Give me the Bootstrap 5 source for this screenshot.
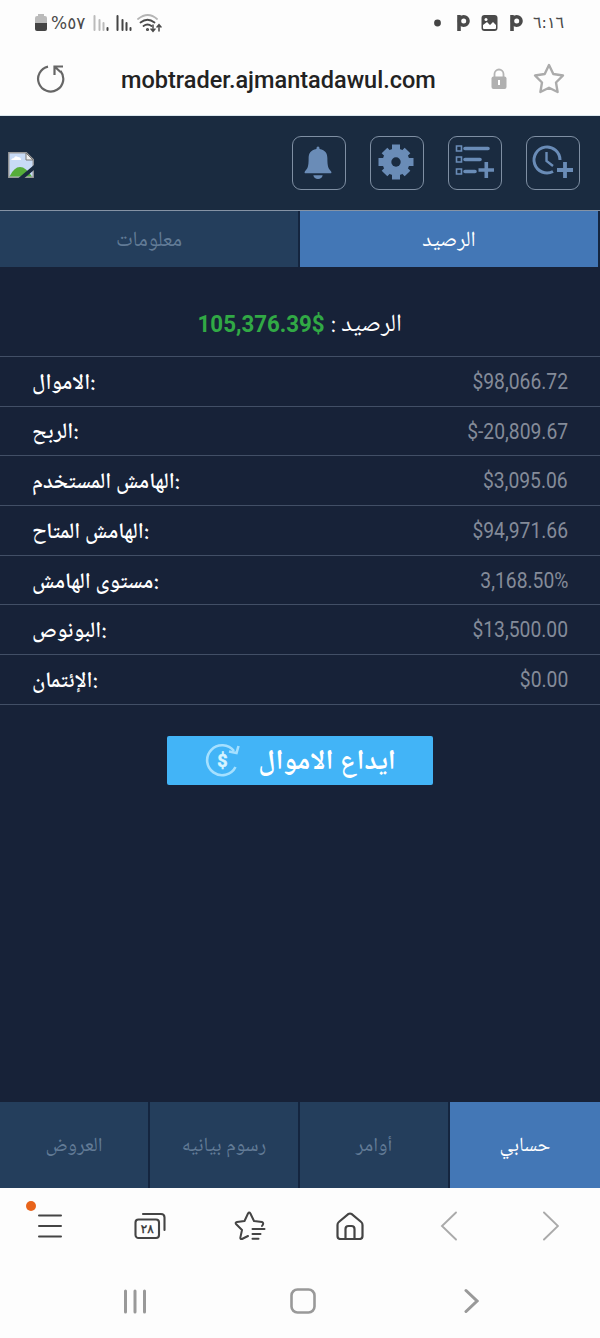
<!DOCTYPE html>
<html lang="ar">
<head>
<meta charset="utf-8">
<meta name="viewport" content="width=device-width, initial-scale=1">
<title>Mob Trader</title>
<link href="https://cdn.jsdelivr.net/npm/bootstrap@5.3.0/dist/css/bootstrap.min.css" rel="stylesheet">
<style>
body{font-family:Roboto,"Noto Sans Arabic","Noto Sans","DejaVu Sans",sans-serif;background:#fdfdfd;color:#fff;height:1338px;overflow:hidden;line-height:1}
svg{display:block;flex:none}
.ar{font-family:"Noto Naskh Arabic UI","Noto Sans Arabic","DejaVu Sans",sans-serif;white-space:nowrap;display:inline-block;padding-top:3px}
.digits{font-family:"DejaVu Sans",sans-serif;white-space:nowrap}
.status{height:46px;padding:0 36px 0 34px;color:#4a4a4a}
.addr{height:70px;padding:0 34px 3px 36px;border-bottom:1px solid #dce8ee}
.url{font-size:23.500px;font-weight:500;color:#222;width:318px;margin-left:55px;padding-top:3px}
.apphead{height:95px;background:#1a2b40;border-bottom:1px solid #8593a5;padding:0 20px 1px 8px}
.tool{width:54px;height:54px;border:1px solid #7f8fa3;border-radius:9px;background:transparent}
.tabcell{background:#243e5c;color:#627b96;border-right:2px solid #14253f;font-size:21.600px}
.tabcell.on{background:#4377b6;color:#fff}
.toptabs{height:56px;background:#16233a}
.panel{background:#172238;height:835px}
.balance{height:89px;padding-top:24px}
.fin{height:49.7px;border-top:1px solid #424f66;padding:0 32px}
.fin:last-child{border-bottom:1px solid #424f66;height:50.7px}
.num{font-size:22px;color:#848b99;display:inline-block;transform:scaleX(.877);transform-origin:100% 50%;padding-top:1px}
.total{font-size:24.500px;font-weight:700;color:#31a945;display:inline-block;transform:scaleX(.91);transform-origin:100% 50%;margin-left:-13px;padding-top:1px}
.lbl{font-size:22.100px;font-weight:600}
.deposit{width:266px;height:49px;background:#42b4f7;border-radius:2px;color:#fff;margin-top:31px}
.bottabs{height:86px;background:#14253f}
.bottabs .tabcell{font-size:20.200px}
.browser{height:75px}
.bitem{width:100px}
.alertdot{width:10px;height:10px;background:#e8641b;left:26px;top:-12px}
</style>
</head>
<body>
<div class="status d-flex align-items-center justify-content-between">
  <div class="d-flex align-items-center">
    <svg width="14" height="20" viewBox="0 0 14 20"><path d="M4 1h6v2h1q2 0 2 2v5H1V5q0-2 2-2h1z" fill="#bbb"/><path d="M1 10h12v6q0 2-2 2H3q-2 0-2-2z" fill="#444"/></svg>
    <span class="digits" style="font-size:17px;width:34px;margin-left:3px" dir="ltr">%&lrm;٥٧</span>
    <svg class="ms-2" width="16" height="18" viewBox="0 0 16 18" stroke-width="2" stroke-linecap="round"><path d="M1.500 2v14M6.500 6v10M10.500 9v7" stroke="#bbb"/><path d="M14.500 14v2" stroke="#444"/></svg>
    <svg style="margin-left:7px" width="16" height="18" viewBox="0 0 16 18" stroke="#444" stroke-width="2" stroke-linecap="round"><path d="M1.500 2v14M6.500 6v10M10.500 9v7M14.500 14v2"/></svg>
    <svg style="margin-left:5px" width="25" height="20" viewBox="0 0 25 20" fill="none" stroke="#4a4a4a" stroke-width="1.800" stroke-linecap="round"><path d="M1 6q10-8 19 0" stroke="#b5b5b5"/><path d="M3.500 9.500q7-5.500 14 0M6.500 13q4-3 8 0"/><circle cx="10.500" cy="16.500" r=".7"/><path d="M16 12v6m-2-2 2 2.300 2-2.300M22 18v-6m-2 2 2-2.300 2 2.300" stroke-width="1.500"/></svg>
  </div>
  <div class="d-flex align-items-center">
    <svg width="7" height="8" viewBox="0 0 7 8"><circle cx="3.500" cy="4" r="3.400" fill="#444"/></svg>
    <svg style="margin-left:15px" width="14" height="18" viewBox="0 0 14 18" fill="none" stroke="#4a4a4a"><path d="M3 1v16" stroke-width="3.600"/><circle cx="7.700" cy="7" r="4.300" stroke-width="3.600"/></svg>
    <svg style="margin-left:11px" width="17" height="18" viewBox="0 0 17 18"><rect x=".5" y="1" width="16" height="16" rx="3" fill="#4a4a4a"/><circle cx="5" cy="5.500" r="1.500" fill="#fff"/><path d="M2 14v-3l4-3 3 3 3-3 3 3v3q0 1-1 1H3q-1 0-1-1" fill="#fff"/></svg>
    <svg style="margin-left:11px" width="14" height="18" viewBox="0 0 14 18" fill="none" stroke="#4a4a4a"><path d="M3 1v16" stroke-width="3.600"/><circle cx="7.700" cy="7" r="4.300" stroke-width="3.600"/></svg>
    <span class="digits" style="font-size:16px;width:31px;margin-left:10px" dir="ltr">٦:١٦</span>
  </div>
</div>
<div class="addr d-flex align-items-center">
  <svg width="30" height="32" viewBox="0 0 30 32" fill="none" stroke="#666" stroke-width="2.200"><path d="M12 3.600A12.600 12.600 0 1 0 24.500 8"/><path d="M27 3.500H18.500V12M18.500 3.500 24.500 9"/></svg>
  <span class="url">mobtrader.ajmantadawul.com</span>
  <svg style="margin-left:52px" width="16" height="22" viewBox="0 0 16 22"><path d="M3.500 10V6a4.500 4.500 0 0 1 9 0v4" fill="none" stroke="#b5b5b5" stroke-width="1.800"/><rect x=".5" y="8.500" width="15" height="12.500" rx="2" fill="#b0b0b0"/><path d="M7 12h2v5H7z" fill="#fff"/></svg>
  <svg style="margin-left:26px" width="32" height="32" viewBox="0 0 32 32" fill="none" stroke="#ababab" stroke-width="2.400" stroke-linejoin="round"><path d="m16 2 4.300 9 9.700 1.500-7 7 1.600 9.500-8.600-4.300-8.600 4.300 1.600-9.500-7-7L11.700 11z"/></svg>
</div>
<header class="apphead d-flex align-items-center justify-content-between">
  <svg class="mt-1" width="26" height="26" viewBox="0 0 26 26"><path d="M.8.800h17.500l6.900 6.700V25.200H.8z" fill="#c8dbf6" stroke="#999" stroke-width="1.400"/><path d="M3 8q1-2 3-2 1-3 4-1 3 0 3 3z" fill="#fff"/><path d="M1.500 24.500Q6 15 12 15t12 9.500z" fill="#56ad3a"/><path d="M18 1v7h7z" fill="#eee" stroke="#777"/><path d="m26 13-15.500 13h6L26 18z" fill="#1a2b40"/></svg>
  <div class="d-flex" style="gap:24px">
    <button class="tool p-0 d-flex align-items-center justify-content-center" aria-label="bell"><svg style="margin-right:2px" width="30" height="36" viewBox="0 0 32 38" fill="#6a8cb7"><path d="M14.300 4q0-2.500 1.700-2.500T17.700 4C24 5 26 9 26 14c0 9 1 11 4 14q1 2-1 2H3q-2 0-1-2c3-3 4-5 4-14 0-5 2-9 8.300-10M11 32h10q-1 4-5 4t-5-4"/></svg></button>
    <button class="tool p-0 d-flex align-items-center justify-content-center" aria-label="settings"><svg style="margin:0 2px 2px 0" width="36" height="36" viewBox="-18 -18 36 36"><g stroke="#6a8cb7" stroke-width="8"><path d="M0-17.500v35M-17.500 0h35M-11.500-11.500l23 23M-11.500 11.500l23-23"/></g><circle r="13.500" fill="#6a8cb7"/><circle r="4.700" fill="#1a2b40"/></svg></button>
    <button class="tool p-0 d-flex align-items-center justify-content-center" aria-label="list"><svg style="margin-bottom:2px" width="42" height="42" viewBox="0 0 42 42" fill="none" stroke="#6a8cb7"><g stroke-width="1.600"><path d="M2.500 5h5v5h-5zM2.500 16h5v5h-5zM2.500 28h5v5h-5z"/></g><path d="M11 7.500h23M11 18.500h15M11 30.500h10" stroke-width="3.600" stroke-linecap="round"/><path d="M24 29.500h16M32 20v19" stroke="#1a2b40" stroke-width="7"/><path d="M24.500 29h15.500M32.300 21v16" stroke-width="3.600"/></svg></button>
    <button class="tool p-0 d-flex align-items-center justify-content-center" aria-label="clock"><svg style="margin-bottom:2px" width="44" height="42" viewBox="0 0 44 42" fill="none" stroke="#6a8cb7" stroke-width="3"><path d="M29 19A13 13 0 1 0 22 30.500"/><path d="M15.500 11v9l6.500 5" stroke-width="2.400"/><path d="M26 29h16M34 21v16" stroke-width="3.800"/></svg></button>
  </div>
</header>
<nav class="toptabs d-flex">
  <div class="tabcell w-50 d-flex align-items-center justify-content-center"><span class="ar">معلومات</span></div>
  <div class="tabcell on w-50 d-flex align-items-center justify-content-center"><span class="ar">الرصيد</span></div>
</nav>
<main class="panel">
  <div class="balance d-flex align-items-center justify-content-center" dir="ltr">
    <span class="total">105,376.39$</span><span class="ar" style="font-size:24.500px;margin-left:6px">: <bdi>الرصيد</bdi></span>
  </div>
  <section dir="ltr">
    <div class="fin d-flex align-items-center justify-content-between"><span class="ar lbl">الاموال:</span><span class="num">$98,066.72</span></div>
    <div class="fin d-flex align-items-center justify-content-between"><span class="ar lbl">الربح:</span><span class="num">$-20,809.67</span></div>
    <div class="fin d-flex align-items-center justify-content-between"><span class="ar lbl">الهامش المستخدم:</span><span class="num">$3,095.06</span></div>
    <div class="fin d-flex align-items-center justify-content-between"><span class="ar lbl">الهامش المتاح:</span><span class="num">$94,971.66</span></div>
    <div class="fin d-flex align-items-center justify-content-between"><span class="ar lbl">مستوى الهامش:</span><span class="num">3,168.50%</span></div>
    <div class="fin d-flex align-items-center justify-content-between"><span class="ar lbl">البونوص:</span><span class="num">$13,500.00</span></div>
    <div class="fin d-flex align-items-center justify-content-between"><span class="ar lbl">الإئتمان:</span><span class="num">$0.00</span></div>
  </section>
  <div class="deposit mx-auto d-flex align-items-center justify-content-center">
    <svg width="36" height="36" viewBox="0 0 36 36" fill="none" stroke="#a5e0ff" stroke-width="2.600"><path d="M30 9A15 15 0 1 0 31.500 25"/><path d="m25 9.500 7.500 1.500L34.500 4"/><text x="18.500" y="24.500" text-anchor="middle" font-size="18" font-weight="700" fill="#d8f4ff" stroke="#d8f4ff" stroke-width=".5">$</text></svg>
    <span class="ar fw-bold" style="font-size:28px;margin-left:18px">ايداع الاموال</span>
  </div>
</main>
<nav class="bottabs d-flex">
  <div class="tabcell w-25 d-flex align-items-center justify-content-center"><span class="ar">العروض</span></div>
  <div class="tabcell w-25 d-flex align-items-center justify-content-center"><span class="ar">رسوم بيانيه</span></div>
  <div class="tabcell w-25 d-flex align-items-center justify-content-center"><span class="ar">أوامر</span></div>
  <div class="tabcell on border-0 w-25 d-flex align-items-center justify-content-center"><span class="ar">حسابي</span></div>
</nav>
<footer>
  <div class="browser d-flex align-items-center">
    <div class="bitem position-relative d-flex justify-content-center"><svg width="26" height="26" viewBox="0 0 26 26" stroke="#444" stroke-width="2" stroke-linecap="round"><path d="M2 2.500h22M2 13h22M2 23.500h22"/></svg><i class="alertdot rounded-circle position-absolute"></i></div>
    <div class="bitem d-flex justify-content-center"><svg width="32" height="28" viewBox="0 0 32 28" fill="none" stroke="#444" stroke-width="2.100" stroke-linecap="round"><rect x="1.500" y="7.500" width="23.500" height="18.500" rx="3"/><path d="M9 2h18q3.500 0 3.500 3.500V18"/><text x="13.300" y="21" text-anchor="middle" font-size="12" class="digits" fill="#333" stroke="#333" stroke-width=".4">٢٨</text></svg></div>
    <div class="bitem d-flex justify-content-center"><svg width="32" height="32" viewBox="0 0 32 32" fill="none" stroke="#444" stroke-width="2" stroke-linecap="round" stroke-linejoin="round"><path d="M14 26 8 29q-2 .5-1.600-1.600L8 20 2 14q-1-1.700 1-2l7.500-1L14 3.500q1.200-2 2.400 0L20 11l8 1q2.400.800 0 4"/><path d="M18.500 19h12M18.500 24h8M18.500 28.800h6"/></svg></div>
    <div class="bitem d-flex justify-content-center"><svg width="28" height="28" viewBox="0 0 28 28" fill="none" stroke="#444" stroke-width="2.200"><path d="M1.500 13q0-2 1.300-3L12.500 2q1.500-1 3 0l9.700 8q1.300 1 1.300 3v11q0 3-3 3h-19q-3 0-3-3z"/><path d="M9.500 27V17q0-3 3-3h3q3 0 3 3v10"/></svg></div>
    <div class="bitem d-flex justify-content-center"><svg style="margin-right:3px" width="18" height="30" viewBox="0 0 18 30" fill="none" stroke="#aaa" stroke-width="1.900" stroke-linecap="round"><path d="M16 1.500 2 15l14 13.500"/></svg></div>
    <div class="bitem d-flex justify-content-center"><svg width="18" height="30" viewBox="0 0 18 30" fill="none" stroke="#aaa" stroke-width="1.900" stroke-linecap="round"><path d="m3 1.500 14 13.500-14 13.500"/></svg></div>
  </div>
  <div class="d-flex align-items-center" style="height:76px;padding-left:123px">
    <svg width="24" height="26" viewBox="0 0 24 26" stroke="#999" stroke-width="3" stroke-linecap="round"><path d="M2.500 3v21M12 3v21M21.500 3v21"/></svg>
    <svg style="margin-left:143px" width="26" height="26" viewBox="0 0 26 26"><rect x="1.500" y="1.500" width="23" height="23" rx="6" fill="none" stroke="#999" stroke-width="2.600"/></svg>
    <svg style="margin-left:148px" width="15" height="26" viewBox="0 0 15 26" fill="none" stroke="#999" stroke-width="3" stroke-linecap="round"><path d="m2 2.500 11 10.500L2 23.500"/></svg>
  </div>
</footer>
<script src="https://cdn.jsdelivr.net/npm/bootstrap@5.3.0/dist/js/bootstrap.bundle.min.js"></script>
</body>
</html>
